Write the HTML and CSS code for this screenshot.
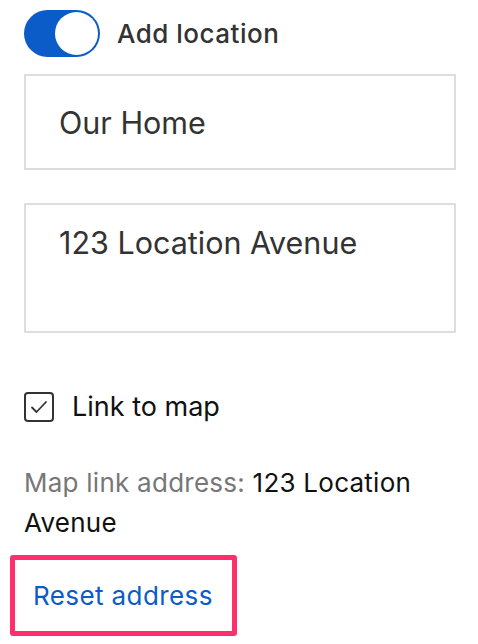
FILE: index.html
```
<!DOCTYPE html>
<html lang="en">
<head>
<meta charset="utf-8">
<link rel="stylesheet" href="styles.css">
</head>
<body>
<div class="page">
  <div class="toggle-row">
    <span class="toggle"><span class="knob"></span></span>
    <span class="toggle-label">Add location</span>
  </div>
  <input class="field" type="text" value="Our Home">
  <textarea class="area">123 Location Avenue</textarea>
  <div class="check-row">
    <span class="checkbox">
      <svg viewBox="0 0 26 26" width="26" height="26"><path d="M6 13.5 L10.5 18 L20 8" fill="none" stroke="#333" stroke-width="1.8" stroke-linecap="round" stroke-linejoin="round"/></svg>
    </span>
    <span class="check-label">Link to map</span>
  </div>
  <p class="map-link"><span class="muted">Map link address:</span> 123 Location Avenue</p>
  <div class="reset-box"><a class="reset-link" href="#">Reset address</a></div>
</div>
</body>
</html>
```
FILE: styles.css
```
html, body {
  margin: 0;
  padding: 0;
  background: #fff;
}
body {
  font-family: Inter, "Noto Sans", sans-serif;
}
.page {
  padding: 10px 22px 0 24px;
  display: flex;
  flex-direction: column;
  align-items: flex-start;
}
.toggle-row {
  display: flex;
  align-items: center;
  gap: 17px;
  height: 47px;
}
.toggle {
  width: 76px;
  height: 47px;
  border-radius: 24px;
  background: #0b5cc8;
  display: flex;
  align-items: center;
  justify-content: flex-end;
  padding: 0 2px;
  box-sizing: border-box;
}
.knob {
  width: 43px;
  height: 43px;
  border-radius: 50%;
  background: #fff;
}
.toggle-label {
  font-size: 26px;
  letter-spacing: 0.5px;
  color: #333;
  font-weight: 500;
}
.field {
  margin-top: 17px;
  width: 432px;
  height: 96px;
  box-sizing: border-box;
  border: 2px solid #dddddd;
  border-radius: 0;
  padding: 0 33px;
  font-family: inherit;
  font-size: 30.5px;
  color: #333;
  outline: none;
  background: #fff;
}
.area {
  margin-top: 33px;
  width: 432px;
  height: 130px;
  box-sizing: border-box;
  border: 2px solid #dddddd;
  border-radius: 0;
  padding: 20px 33px 0;
  font-family: inherit;
  font-size: 30.5px;
  line-height: 1.2;
  color: #333;
  resize: none;
  outline: none;
  display: block;
}
.check-row {
  margin-top: 57px;
  display: flex;
  align-items: center;
  gap: 18px;
}
.checkbox {
  width: 30px;
  height: 30px;
  box-sizing: border-box;
  border: 2px solid #333;
  border-radius: 4px;
  display: flex;
  align-items: center;
  justify-content: center;
}
.check-label {
  font-size: 27px;
  color: #111;
}
.map-link {
  margin: 40px 0 0;
  font-size: 26px;
  line-height: 40px;
  letter-spacing: 0.25px;
  color: #111;
}
.muted {
  color: #777;
}
.reset-box {
  margin: 12px 0 0 -14px;
  width: 227px;
  height: 81px;
  box-sizing: border-box;
  border: 5px solid #ff2f6d;
  border-radius: 3px;
  padding-left: 18px;
  display: flex;
  align-items: center;
}
.reset-link {
  font-size: 26px;
  letter-spacing: 0.4px;
  color: #0b5cc8;
  text-decoration: none;
}
```
